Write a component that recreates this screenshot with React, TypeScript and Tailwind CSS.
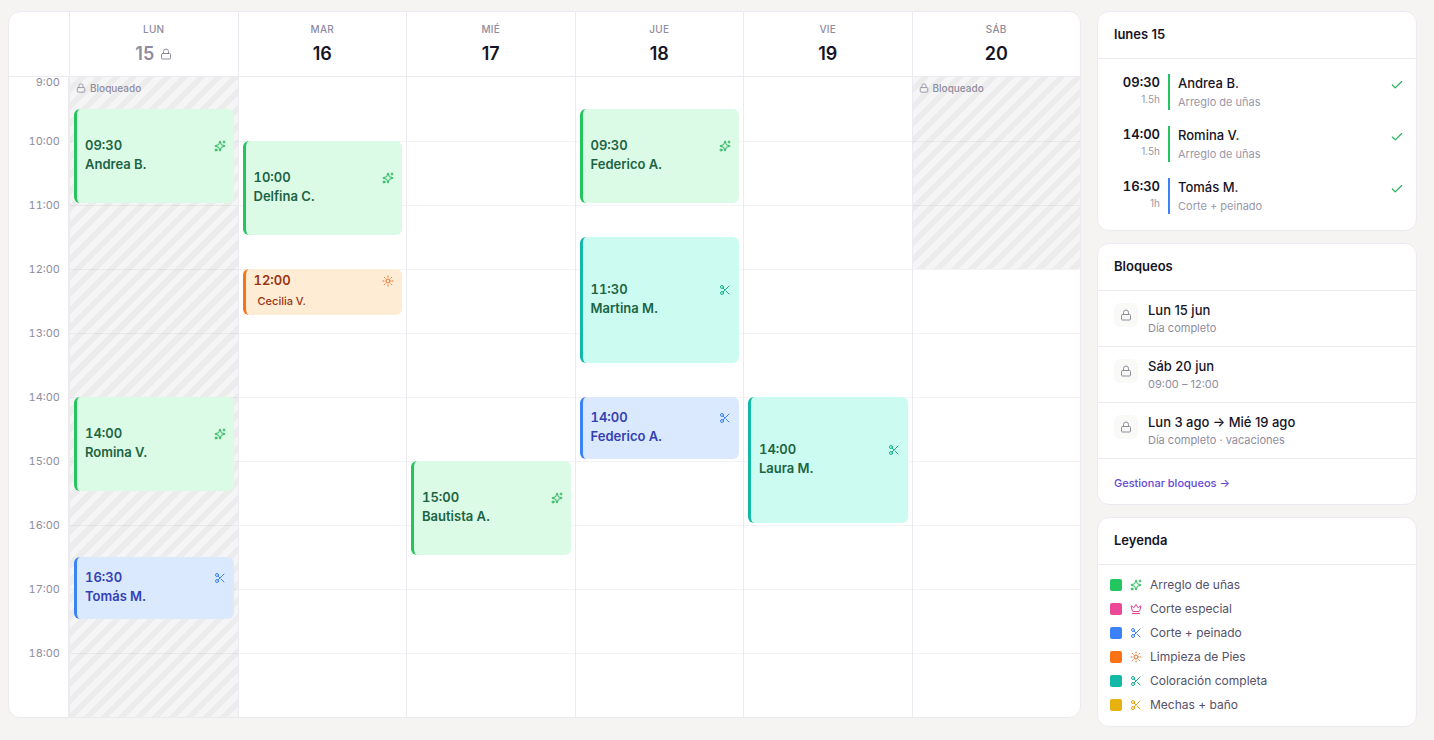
import { clsx } from 'clsx';
import { Check, Crown, Lock, LucideIcon, Scissors, Sparkles, Sun } from 'lucide-react';

type Tone = 'green' | 'pink' | 'blue' | 'orange' | 'teal' | 'yellow';

interface CalendarEvent {
    time: string;
    client: string;
    start: number; // quarter hours since 9:00
    length: number; // in quarter hours
    tone: Tone;
    icon: LucideIcon;
    compact?: boolean;
}

interface Day {
    label: string;
    date: number;
    locked?: boolean;
    blockedLength?: number;
    events: CalendarEvent[];
}

const HOURS = ['9:00', '10:00', '11:00', '12:00', '13:00', '14:00', '15:00', '16:00', '17:00', '18:00'];

const cardTones: Record<Tone, string> = {
    green: 'bg-[#dcfbe7] text-[#1b6443]',
    pink: 'bg-[#fce7f3] text-[#9d174d]',
    blue: 'bg-[#dbe9fe] text-[#3340b4]',
    orange: 'bg-[#ffecd5] text-[#9a3412]',
    teal: 'bg-[#ccfbf1] text-[#1b6443]',
    yellow: 'bg-[#fef9c3] text-[#854d0e]',
};

const edgeTones: Record<Tone, string> = {
    green: 'border-[#22c55e]',
    pink: 'border-[#ec4899]',
    blue: 'border-[#3b82f6]',
    orange: 'border-[#f97316]',
    teal: 'border-[#14b8a6]',
    yellow: 'border-[#eab308]',
};

const iconTones: Record<Tone, string> = {
    green: 'text-[#22b358]',
    pink: 'text-[#e0448c]',
    blue: 'text-[#3b82f6]',
    orange: 'text-[#e2702a]',
    teal: 'text-[#14b08c]',
    yellow: 'text-[#e5a50a]',
};

const swatchTones: Record<Tone, string> = {
    green: 'bg-[#22c55e]',
    pink: 'bg-[#ec4899]',
    blue: 'bg-[#3b82f6]',
    orange: 'bg-[#f97316]',
    teal: 'bg-[#14b8a6]',
    yellow: 'bg-[#e7b20f]',
};

const days: Day[] = [
    {
        label: 'Lun',
        date: 15,
        locked: true,
        blockedLength: 40,
        events: [
            { time: '09:30', client: 'Andrea B.', start: 2, length: 6, tone: 'green', icon: Sparkles },
            { time: '14:00', client: 'Romina V.', start: 20, length: 6, tone: 'green', icon: Sparkles },
            { time: '16:30', client: 'Tomás M.', start: 30, length: 4, tone: 'blue', icon: Scissors },
        ],
    },
    {
        label: 'Mar',
        date: 16,
        events: [
            { time: '10:00', client: 'Delfina C.', start: 4, length: 6, tone: 'green', icon: Sparkles },
            { time: '12:00', client: 'Cecilia V.', start: 12, length: 3, tone: 'orange', icon: Sun, compact: true },
        ],
    },
    {
        label: 'Mié',
        date: 17,
        events: [{ time: '15:00', client: 'Bautista A.', start: 24, length: 6, tone: 'green', icon: Sparkles }],
    },
    {
        label: 'Jue',
        date: 18,
        events: [
            { time: '09:30', client: 'Federico A.', start: 2, length: 6, tone: 'green', icon: Sparkles },
            { time: '11:30', client: 'Martina M.', start: 10, length: 8, tone: 'teal', icon: Scissors },
            { time: '14:00', client: 'Federico A.', start: 20, length: 4, tone: 'blue', icon: Scissors },
        ],
    },
    {
        label: 'Vie',
        date: 19,
        events: [{ time: '14:00', client: 'Laura M.', start: 20, length: 8, tone: 'teal', icon: Scissors }],
    },
    { label: 'Sáb', date: 20, blockedLength: 12, events: [] },
];

const agenda: { time: string; duration: string; client: string; service: string; tone: Tone }[] = [
    { time: '09:30', duration: '1.5h', client: 'Andrea B.', service: 'Arreglo de uñas', tone: 'green' },
    { time: '14:00', duration: '1.5h', client: 'Romina V.', service: 'Arreglo de uñas', tone: 'green' },
    { time: '16:30', duration: '1h', client: 'Tomás M.', service: 'Corte + peinado', tone: 'blue' },
];

const blocks = [
    { title: 'Lun 15 jun', detail: 'Día completo' },
    { title: 'Sáb 20 jun', detail: '09:00 – 12:00' },
    { title: 'Lun 3 ago → Mié 19 ago', detail: 'Día completo · vacaciones' },
];

const legend: { name: string; tone: Tone; icon: LucideIcon }[] = [
    { name: 'Arreglo de uñas', tone: 'green', icon: Sparkles },
    { name: 'Corte especial', tone: 'pink', icon: Crown },
    { name: 'Corte + peinado', tone: 'blue', icon: Scissors },
    { name: 'Limpieza de Pies', tone: 'orange', icon: Sun },
    { name: 'Coloración completa', tone: 'teal', icon: Scissors },
    { name: 'Mechas + baño', tone: 'yellow', icon: Scissors },
];

function EventCard({ event }: { event: CalendarEvent }) {
    const Icon = event.icon;
    return (
        <button
            type="button"
            className={clsx(
                'col-start-1 mx-1 mb-0.5 flex flex-col justify-center rounded-md border-l-[3px] px-2 pb-0.5 text-left',
                cardTones[event.tone],
                edgeTones[event.tone],
            )}
            style={{ gridRow: `${event.start + 1} / span ${event.length}` }}
        >
            <span className="flex w-full items-center justify-between text-[13px] leading-[19px] font-semibold tabular-nums">
                {event.time}
                <Icon className={clsx('size-3', iconTones[event.tone])} />
            </span>
            {event.compact ? (
                <span className="px-1 pt-0.5 text-[11px] leading-[19px] font-medium">{event.client}</span>
            ) : (
                <span className="text-[13px] leading-[19px] font-semibold">{event.client}</span>
            )}
        </button>
    );
}

function DayColumn({ day }: { day: Day }) {
    return (
        <div className="grid grid-cols-1 grid-rows-[repeat(40,16px)] border-l border-[#ebeaf0]">
            {HOURS.map((hour, index) => (
                <div
                    key={hour}
                    className={clsx('col-start-1', index > 0 && 'border-t border-[#f3f3f5]')}
                    style={{ gridRow: `${index * 4 + 1} / span 4` }}
                />
            ))}
            {day.blockedLength && (
                <div
                    className="col-start-1 bg-[repeating-linear-gradient(135deg,rgba(0,0,0,0.04)_0px,rgba(0,0,0,0.04)_6px,rgba(0,0,0,0.075)_6px,rgba(0,0,0,0.075)_12px)] px-1.5 py-1"
                    style={{ gridRow: `1 / span ${day.blockedLength}` }}
                >
                    <p className="flex items-center gap-1 text-[10px] leading-[14px] font-medium text-[#8f8c9e]">
                        <Lock className="size-2.5" />
                        Bloqueado
                    </p>
                </div>
            )}
            {day.events.map((event) => (
                <EventCard key={event.time} event={event} />
            ))}
        </div>
    );
}

function WeekCalendar() {
    return (
        <main className="min-w-0 flex-1 overflow-hidden rounded-xl border border-[#ebeaf0] bg-white">
            <div className="grid grid-cols-[60px_repeat(6,minmax(0,1fr))] border-b border-[#ebeaf0]">
                <div />
                {days.map((day) => (
                    <div
                        key={day.label}
                        className="flex flex-col items-center gap-1.5 border-l border-[#ebeaf0] py-2.5"
                    >
                        <span className="text-[10px] leading-[14px] font-medium tracking-wide text-[#8f8c9e] uppercase">
                            {day.label}
                        </span>
                        <span
                            className={clsx(
                                'flex items-center gap-1.5 text-lg leading-6 font-semibold',
                                day.locked ? 'text-[#8f8c9e]' : 'text-[#171426]',
                            )}
                        >
                            {day.date}
                            {day.locked && <Lock className="size-3" />}
                        </span>
                    </div>
                ))}
            </div>
            <div className="grid grid-cols-[60px_repeat(6,minmax(0,1fr))]">
                <div className="border-r border-[#ebeaf0] pr-2 text-right text-[11px] text-[#8f8c9e] tabular-nums">
                    {HOURS.map((hour, index) => (
                        <div key={hour} className={index === 0 ? 'h-14 leading-[10px]' : 'h-16 leading-4'}>
                            {hour}
                        </div>
                    ))}
                </div>
                {days.map((day) => (
                    <DayColumn key={day.label} day={day} />
                ))}
            </div>
        </main>
    );
}

function Panel({ title, children }: { title: string; children: React.ReactNode }) {
    return (
        <section className="overflow-hidden rounded-xl border border-[#ebeaf0] bg-white">
            <h2 className="border-b border-[#ebeaf0] px-4 pt-[11px] pb-3 text-[13px] leading-[23px] font-semibold text-[#171426]">
                {title}
            </h2>
            {children}
        </section>
    );
}

export default function App() {
    return (
        <div className="flex min-h-screen items-start gap-4 bg-[#f5f4f2] pt-[11px] pr-[17px] pb-3 pl-2 font-['Inter',sans-serif] antialiased">
            <WeekCalendar />

            <aside className="flex w-80 shrink-0 flex-col gap-3">
                <Panel title="lunes 15">
                    <ul className="pt-[7px] pb-2">
                        {agenda.map((item) => (
                            <li key={item.time} className="flex gap-2 px-3 py-2">
                                <div className="w-[50px] text-right">
                                    <p className="text-[13px] leading-[17px] font-semibold text-[#171426] tabular-nums">
                                        {item.time}
                                    </p>
                                    <p className="text-[10px] leading-[17px] text-[#9a97a8]">{item.duration}</p>
                                </div>
                                <div className={clsx('h-9 flex-1 border-l-2 pl-2', edgeTones[item.tone])}>
                                    <p className="text-[13px] leading-[19px] font-medium text-[#171426]">
                                        {item.client}
                                    </p>
                                    <p className="text-[11px] leading-[19px] text-[#9a97a8]">{item.service}</p>
                                </div>
                                <Check className="mt-1 size-3.5 text-[#22b358]" />
                            </li>
                        ))}
                    </ul>
                </Panel>

                <Panel title="Bloqueos">
                    <ul>
                        {blocks.map((block) => (
                            <li
                                key={block.title}
                                className="flex items-start gap-2.5 border-b border-[#ebeaf0] px-4 py-2.5"
                            >
                                <span className="mt-0.5 flex size-6 items-center justify-center rounded-md bg-[#f9f9f8] text-[#8f8c9e]">
                                    <Lock className="size-3" />
                                </span>
                                <div>
                                    <p className="text-[13px] leading-[19px] font-medium text-[#171426]">
                                        {block.title}
                                    </p>
                                    <p className="text-[11px] leading-4 text-[#8f8c9e]">{block.detail}</p>
                                </div>
                            </li>
                        ))}
                    </ul>
                    <a
                        href="#bloqueos"
                        className="block px-4 pt-3.5 pb-2.5 text-[11px] leading-[21px] font-medium text-[#6549d5]"
                    >
                        Gestionar bloqueos →
                    </a>
                </Panel>

                <Panel title="Leyenda">
                    <ul className="px-3 pt-2 pb-[9px]">
                        {legend.map(({ name, tone, icon: Icon }) => (
                            <li key={name} className="flex items-center gap-2 text-xs leading-6 text-[#55516a]">
                                <span className={clsx('size-3 rounded-xs', swatchTones[tone])} />
                                <Icon className={clsx('size-3', iconTones[tone])} />
                                {name}
                            </li>
                        ))}
                    </ul>
                </Panel>
            </aside>
        </div>
    );
}
